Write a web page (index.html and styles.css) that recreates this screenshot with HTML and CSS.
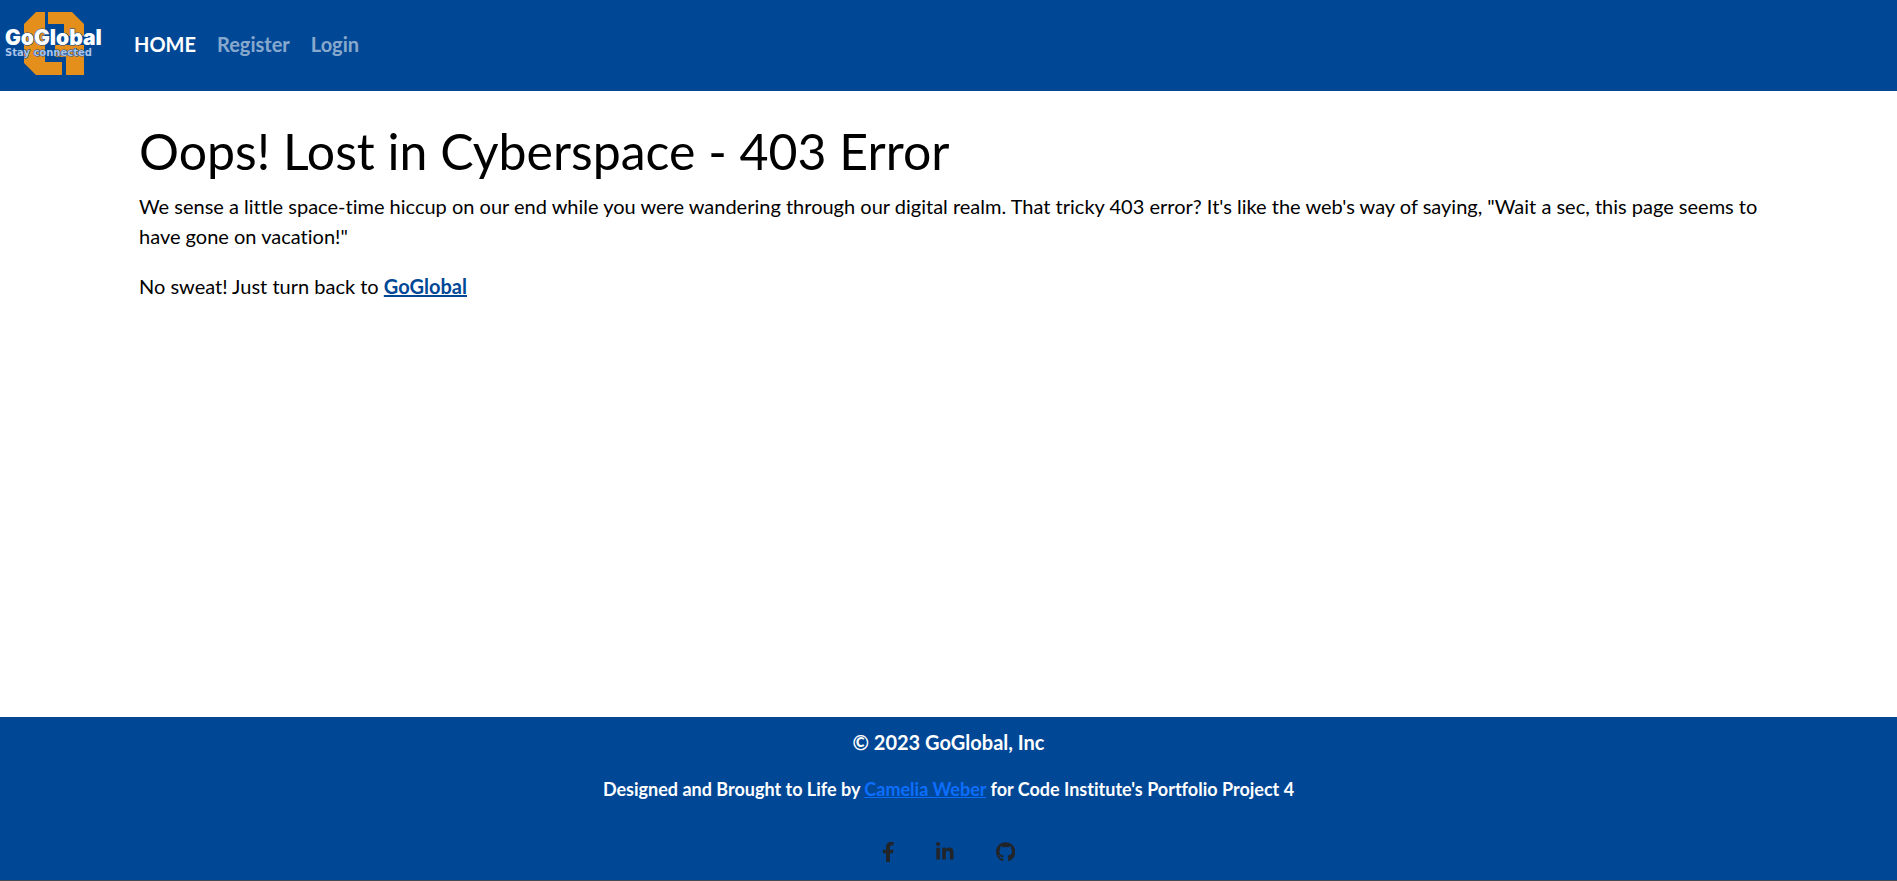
FILE: index.html
```html
<!DOCTYPE html>
<html lang="en">
<head>
<meta charset="utf-8">
<meta name="viewport" content="width=device-width, initial-scale=1">
<title>GoGlobal - 403 Error</title>
<link rel="stylesheet" href="styles.css">
</head>
<body>
<header class="navbar">
  <a class="brand" href="#" aria-label="GoGlobal home">
    <svg class="logo" viewBox="0 0 110 91" role="img" aria-label="GoGlobal - Stay connected">
      <g fill="#e48e1b">
        <path d="M36 12H45V62H62V75H36L24 63V24Z"/>
        <path d="M48 12H72L84 24V36H64V24H48Z"/>
        <path d="M55 45H84V75H66V57H55Z"/>
      </g>
      <text class="logo-name" x="5" y="45">GoGlobal</text>
      <text class="logo-tag" x="5" y="56">Stay connected</text>
    </svg>
  </a>
  <nav class="links" aria-label="Main">
    <a class="active" href="#">HOME</a>
    <a href="#">Register</a>
    <a href="#">Login</a>
  </nav>
</header>
<main class="content">
  <h1>Oops! Lost in Cyberspace - 403 Error</h1>
  <p>We sense a little space-time hiccup on our end while you were wandering through our digital realm. That tricky 403 error? It's like the web's way of saying, "Wait a sec, this page seems to have gone on vacation!"</p>
  <p>No sweat! Just turn back to <a class="home-link" href="#">GoGlobal</a></p>
</main>
<footer class="footer">
  <p class="copyright">© 2023 GoGlobal, Inc</p>
  <p class="credit">Designed and Brought to Life by <a href="#">Camelia Weber</a> for Code Institute's Portfolio Project 4</p>
  <div class="social">
    <a href="#" aria-label="Facebook"><svg height="20" viewBox="0 0 320 512"><path d="M279.14 288l14.22-92.66h-88.91v-60.13c0-25.35 12.42-50.06 52.24-50.06h40.42V6.26S260.43 0 225.36 0c-73.22 0-121.08 44.38-121.08 124.72v70.62H22.89V288h81.39v224h100.17V288z"/></svg></a>
    <a href="#" aria-label="LinkedIn"><svg height="20" viewBox="0 0 448 512"><path d="M100.28 448H7.4V148.9h92.88zM53.79 108.1C24.09 108.1 0 83.5 0 53.8a53.79 53.79 0 0 1 107.58 0c0 29.7-24.1 54.3-53.79 54.3zM447.9 448h-92.68V302.4c0-34.7-.7-79.2-48.29-79.2-48.29 0-55.69 37.7-55.69 76.7V448h-92.78V148.9h89.08v40.8h1.3c12.4-23.5 42.69-48.3 87.88-48.3 94 0 111.28 61.9 111.28 142.3V448z"/></svg></a>
    <a href="#" aria-label="GitHub"><svg height="20" viewBox="0 0 496 512"><path d="M165.9 397.4c0 2-2.3 3.6-5.2 3.6-3.3.3-5.6-1.3-5.6-3.6 0-2 2.3-3.6 5.2-3.6 3-.3 5.6 1.3 5.6 3.6zM244.8 8C106.1 8 0 113.3 0 252c0 110.9 69.8 205.8 169.5 239.2 12.8 2.3 17.3-5.6 17.3-12.1 0-6.2-.3-40.4-.3-61.4 0 0-70 15-84.7-29.8 0 0-11.4-29.1-27.8-36.6 0 0-22.9-15.7 1.6-15.4 0 0 24.9 2 38.6 25.8 21.9 38.6 58.6 27.5 72.9 20.9 2.3-16 8.8-27.1 16-33.7-55.9-6.2-112.3-14.3-112.3-110.5 0-27.5 7.6-41.3 23.6-58.9-2.6-6.5-11.1-33.3 2.6-67.9 20.9-6.5 69 27 69 27 20-5.6 41.5-8.5 62.8-8.5s42.8 2.9 62.8 8.5c0 0 48.1-33.6 69-27 13.7 34.7 5.2 61.4 2.6 67.9 16 17.7 25.8 31.5 25.8 58.9 0 96.5-58.9 104.2-114.8 110.5 9.2 7.9 17 22.9 17 46.4 0 33.7-.3 75.4-.3 83.6 0 6.5 4.6 14.4 17.3 12.1C428.2 457.8 496 362.9 496 252 496 113.3 383.5 8 244.8 8z"/></svg></a>
  </div>
</footer>
</body>
</html>
```
FILE: styles.css
```css
* { box-sizing: border-box; }

body {
  margin: 0;
  min-height: 100vh;
  display: flex;
  flex-direction: column;
  font: 400 20px/30px Lato, sans-serif;
  font-variant-ligatures: none;
  color: #000;
  background: #fff;
}

.navbar {
  display: flex;
  align-items: center;
  gap: 24px;
  background: #004796;
}

.brand, .logo { display: block; }
.logo { width: 110px; height: 91px; }
.logo-name, .logo-tag {
  paint-order: stroke;
  stroke: #004796;
  stroke-width: 1px;
}
.logo-name { font: 900 21px Inter, sans-serif; fill: #fff; }
.logo-tag { font: 700 10px "DejaVu Sans", sans-serif; fill: #a9c4e6; }

.links {
  display: flex;
  gap: 21px;
  padding-bottom: 4px;
}
.links a {
  color: rgba(255, 255, 255, .55);
  font-weight: 700;
  text-decoration: none;
}
.links .active { color: #fff; }

.content {
  flex: 1;
  padding: 30px 139px;
}
.content h1 {
  margin: 0 0 10px;
  font-size: 50px;
  font-weight: 400;
  line-height: 60px;
}
.content p { margin: 0 0 20px; }
.home-link { color: #004796; font-weight: 700; }

.footer {
  padding: 10px 16px 18px;
  border-bottom: 1px solid #444b52;
  background: #004796;
  color: #fff;
  font-weight: 700;
  text-align: center;
}
.footer p { margin: 0; }
.footer .credit { margin-top: 18px; font-size: 18px; line-height: 28px; }
.credit a { color: #0d6efd; }

.social {
  display: flex;
  justify-content: center;
  gap: 42px;
  margin-top: 39px;
}
.social svg { display: block; fill: #212529; }
```
